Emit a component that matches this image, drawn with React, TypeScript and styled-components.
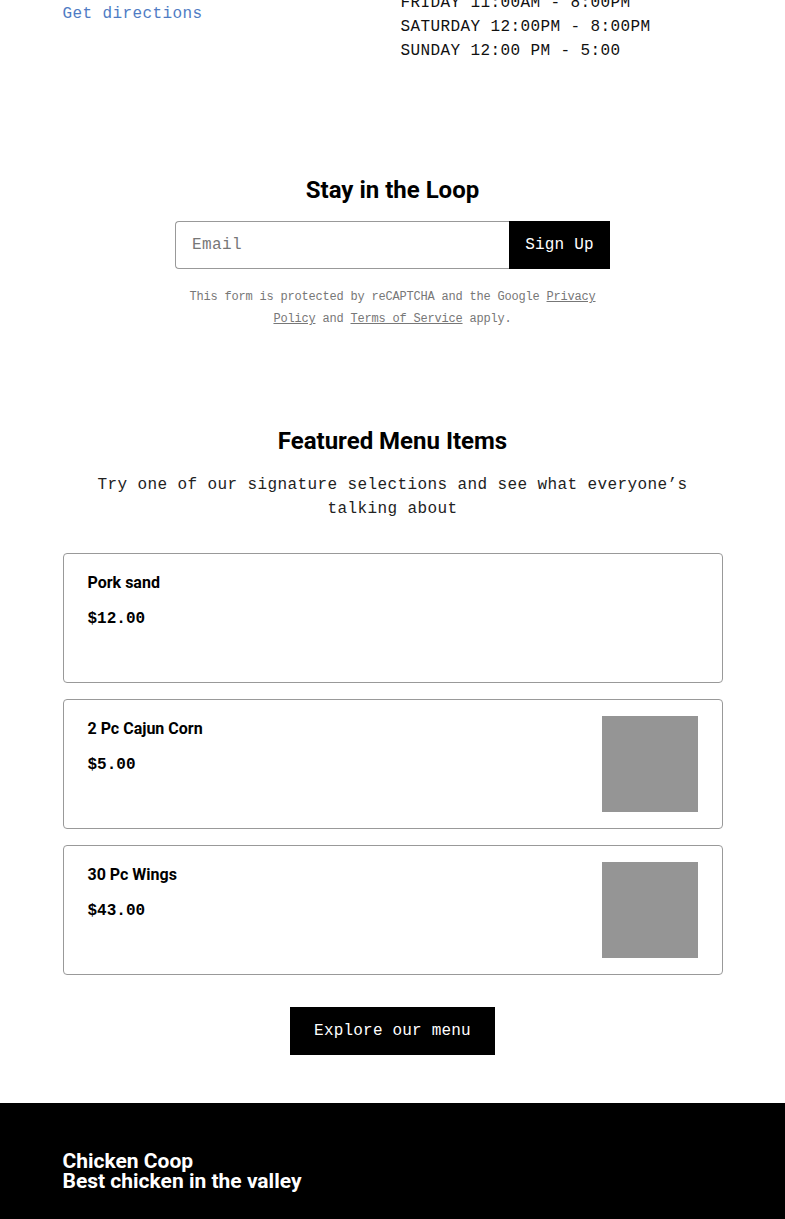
import React from "react";
import styled, { createGlobalStyle } from "styled-components";

interface MenuItem {
    name: string;
    price: string;
    hasImage: boolean;
}

const items: MenuItem[] = [
    { name: "Pork sand", price: "$12.00", hasImage: false },
    { name: "2 Pc Cajun Corn", price: "$5.00", hasImage: true },
    { name: "30 Pc Wings", price: "$43.00", hasImage: true },
];

const hours = ["FRIDAY 11:00AM - 8:00PM", "SATURDAY 12:00PM - 8:00PM", "SUNDAY 12:00 PM - 5:00"];

export default function App() {
    return (
        <>
            <GlobalStyle />
            <Page>
                <Container>
                    <InfoGrid>
                        <LeftCol>
                            <DirLink href="#">Get directions</DirLink>
                        </LeftCol>
                        <HoursList>
                            {hours.map((h) => (
                                <HourLine key={h}>{h}</HourLine>
                            ))}
                        </HoursList>
                    </InfoGrid>
                </Container>

                <Newsletter>
                    <Heading>Stay in the Loop</Heading>
                    <Form onSubmit={(e) => e.preventDefault()}>
                        <EmailInput placeholder="Email" />
                        <SignUp type="submit">Sign Up</SignUp>
                    </Form>
                    <FinePrint>
                        This form is protected by reCAPTCHA and the Google <FineLink href="#">Privacy Policy</FineLink> and{" "}
                        <FineLink href="#">Terms of Service</FineLink> apply.
                    </FinePrint>
                </Newsletter>

                <Container>
                    <Featured>
                        <Heading>Featured Menu Items</Heading>
                        <Subtitle>Try one of our signature selections and see what everyone’s talking about</Subtitle>
                        <CardList>
                            {items.map((item) => (
                                <Card key={item.name}>
                                    <CardText>
                                        <ItemName>{item.name}</ItemName>
                                        <Price>{item.price}</Price>
                                    </CardText>
                                    {item.hasImage && <Thumb />}
                                </Card>
                            ))}
                        </CardList>
                        <Explore>Explore our menu</Explore>
                    </Featured>
                </Container>

                <Footer>
                    <Container>
                        <Brand>
                            Chicken Coop
                            <br />
                            Best chicken in the valley
                        </Brand>
                    </Container>
                </Footer>
            </Page>
        </>
    );
}

const GlobalStyle = createGlobalStyle`
  body {
    margin: 0;
    background: #fff;
    color: #000;
    font-family: "Liberation Mono", "DejaVu Sans Mono", monospace;
  }
  * { box-sizing: border-box; }
`;

const Page = styled.div`
  overflow: hidden;
`;

const Container = styled.div`
  width: 660px;
  margin: 0 auto;
`;

const InfoGrid = styled.div`
  display: grid;
  grid-template-columns: 1fr 1fr;
  column-gap: 16px;
  margin-top: -9px;
`;

const LeftCol = styled.div`
  padding-top: 11px;
`;

const DirLink = styled.a`
  font-size: 16px;
  letter-spacing: 0.4px;
  line-height: 24px;
  color: #4f7cc4;
  text-decoration: none;
`;

const HoursList = styled.div`
  display: flex;
  flex-direction: column;
`;

const HourLine = styled.div`
  font-size: 16px;
  letter-spacing: 0.4px;
  line-height: 24px;
  color: #111;
`;

const Newsletter = styled.section`
  display: flex;
  flex-direction: column;
  align-items: center;
  padding-top: 112px;
`;

const Heading = styled.h2`
  margin: 0;
  font-family: Roboto, "Noto Sans", sans-serif;
  font-weight: 700;
  font-size: 24px;
  line-height: 30px;
  text-align: center;
`;

const Form = styled.form`
  display: flex;
  margin-top: 16px;
`;

const EmailInput = styled.input`
  width: 334px;
  height: 48px;
  border: 1px solid #999;
  border-right: none;
  border-radius: 4px 0 0 4px;
  padding: 0 16px;
  font-family: "Liberation Mono", monospace;
  font-size: 16px;
  letter-spacing: 0.4px;
  outline: none;
  &::placeholder {
    color: #777;
  }
`;

const SignUp = styled.button`
  width: 101px;
  height: 48px;
  border: none;
  background: #000;
  color: #fff;
  font-family: "Liberation Mono", monospace;
  font-size: 16px;
  letter-spacing: 0.2px;
  cursor: pointer;
`;

const FinePrint = styled.p`
  width: 420px;
  margin: 17px 0 0;
  font-size: 12px;
  letter-spacing: -0.2px;
  line-height: 22px;
  color: #777;
  text-align: center;
`;

const FineLink = styled.a`
  color: #777;
  text-decoration: underline;
`;

const Featured = styled.section`
  display: flex;
  flex-direction: column;
  align-items: center;
  padding-top: 96px;
`;

const Subtitle = styled.p`
  width: 610px;
  margin: 17px 0 0;
  font-size: 16px;
  letter-spacing: 0.4px;
  line-height: 24px;
  color: #222;
  text-align: center;
`;

const CardList = styled.div`
  display: flex;
  flex-direction: column;
  gap: 16px;
  width: 100%;
  margin-top: 32px;
`;

const Card = styled.div`
  display: flex;
  justify-content: space-between;
  align-items: flex-start;
  height: 130px;
  border: 1px solid #999;
  border-radius: 4px;
  padding: 16px 24px;
`;

const CardText = styled.div`
  display: flex;
  flex-direction: column;
  padding-top: 2px;
`;

const ItemName = styled.div`
  font-family: Roboto, "Noto Sans", sans-serif;
  font-weight: 700;
  font-size: 16px;
  line-height: 22px;
`;

const Price = styled.div`
  margin-top: 14px;
  font-weight: 700;
  font-size: 16px;
  line-height: 22px;
`;

const Thumb = styled.div`
  width: 96px;
  height: 96px;
  background: #959595;
`;

const Explore = styled.button`
  margin-top: 32px;
  width: 205px;
  height: 48px;
  border: none;
  background: #000;
  color: #fff;
  font-family: "Liberation Mono", monospace;
  font-size: 16px;
  letter-spacing: 0.2px;
  cursor: pointer;
`;

const Footer = styled.footer`
  margin-top: 48px;
  background: #000;
  color: #fff;
  padding: 48px 0 40px;
`;

const Brand = styled.div`
  font-family: Roboto, "Noto Sans", sans-serif;
  font-weight: 700;
  font-size: 21px;
  line-height: 20px;
`;
